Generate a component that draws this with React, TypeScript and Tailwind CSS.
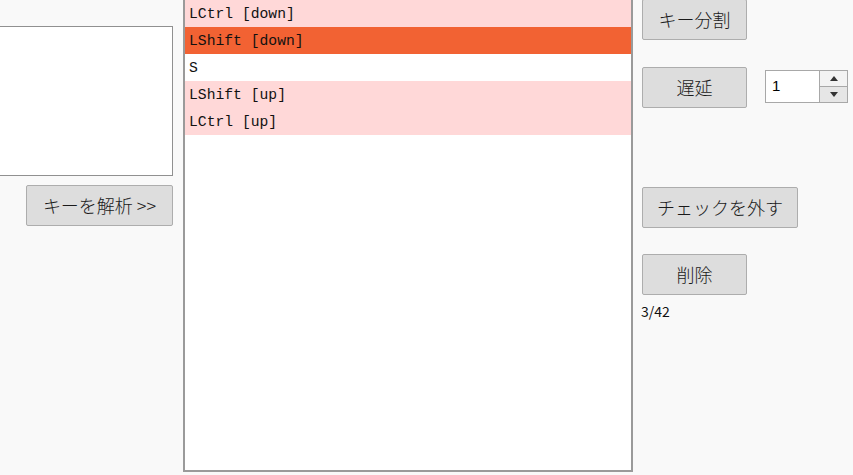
import React from 'react';

type Row = { text: string; tone: 'pink' | 'sel' | 'none' };

const rows: Row[] = [
  { text: 'LCtrl [down]', tone: 'pink' },
  { text: 'LShift [down]', tone: 'sel' },
  { text: 'S', tone: 'none' },
  { text: 'LShift [up]', tone: 'pink' },
  { text: 'LCtrl [up]', tone: 'pink' },
];

const toneClass = {
  pink: 'bg-[#ffd8d8]',
  sel: 'bg-[#f26233]',
  none: 'bg-white',
};

function Btn({ label, w }: { label: string; w: string }) {
  return (
    <button
      className={`${w} h-[41px] flex items-center justify-center rounded-[2px] border border-[#adadad] bg-[#dddddd] text-[18px] font-light text-[#1a1a1a]`}
      style={{ fontFamily: '"Noto Sans CJK JP", sans-serif' }}
    >
      {label}
    </button>
  );
}

export default function App() {
  return (
    <div className="w-[853px] h-[475px] overflow-hidden bg-[#f9f9f9] flex">
      {/* left: input + parse button */}
      <div className="w-[173px] shrink-0 flex flex-col items-end">
        <div className="mt-[26px] -ml-[2px] w-[175px] h-[150px] border border-[#909090] bg-white" />
        <div className="mt-[9px]">
          <Btn label="キーを解析 >>" w="w-[147px]" />
        </div>
      </div>

      {/* key list */}
      <div className="ml-[10px] -mt-[2px] w-[450px] h-[474px] shrink-0 border-2 border-[#9a9a9a] bg-white">
        {rows.map((r) => (
          <div
            key={r.text}
            className={`h-[27px] pl-[4px] pt-[2px] flex items-center text-[14.7px] text-[#111] ${toneClass[r.tone]}`}
            style={{ fontFamily: '"Liberation Mono", monospace' }}
          >
            {r.text}
          </div>
        ))}
      </div>

      {/* right controls */}
      <div className="ml-[9px] flex flex-col">
        <div className="-mt-[1px]">
          <Btn label="キー分割" w="w-[105px]" />
        </div>
        <div className="mt-[27px] flex items-center">
          <Btn label="遅延" w="w-[105px]" />
          <div className="ml-[18px] mt-[-2px] w-[83px] h-[33px] flex border border-[#a8a8a8] bg-white">
            <div
              className="flex-1 flex items-center pl-[6px] text-[15px] text-black"
              style={{ fontFamily: '"Liberation Sans", sans-serif' }}
            >
              1
            </div>
            <div className="w-[28px] flex flex-col border-l border-[#a8a8a8]">
              <div className="flex-1 flex items-center justify-center bg-[#f3f3f3]">
                <svg width="8" height="5" viewBox="0 0 8 5">
                  <path d="M0 5 L4 0 L8 5 Z" fill="#333" />
                </svg>
              </div>
              <div className="flex-1 flex items-center justify-center bg-[#e6e6e6] border-t border-[#a8a8a8]">
                <svg width="8" height="5" viewBox="0 0 8 5">
                  <path d="M0 0 L8 0 L4 5 Z" fill="#333" />
                </svg>
              </div>
            </div>
          </div>
        </div>
        <div className="mt-[79px]">
          <Btn label="チェックを外す" w="w-[156px]" />
        </div>
        <div className="mt-[26px]">
          <Btn label="削除" w="w-[105px]" />
        </div>
        <div
          className="mt-[7px] -ml-[1px] text-[14px] leading-[18px] text-[#111]"
          style={{ fontFamily: '"Noto Sans CJK JP", sans-serif' }}
        >
          3/42
        </div>
      </div>
    </div>
  );
}
